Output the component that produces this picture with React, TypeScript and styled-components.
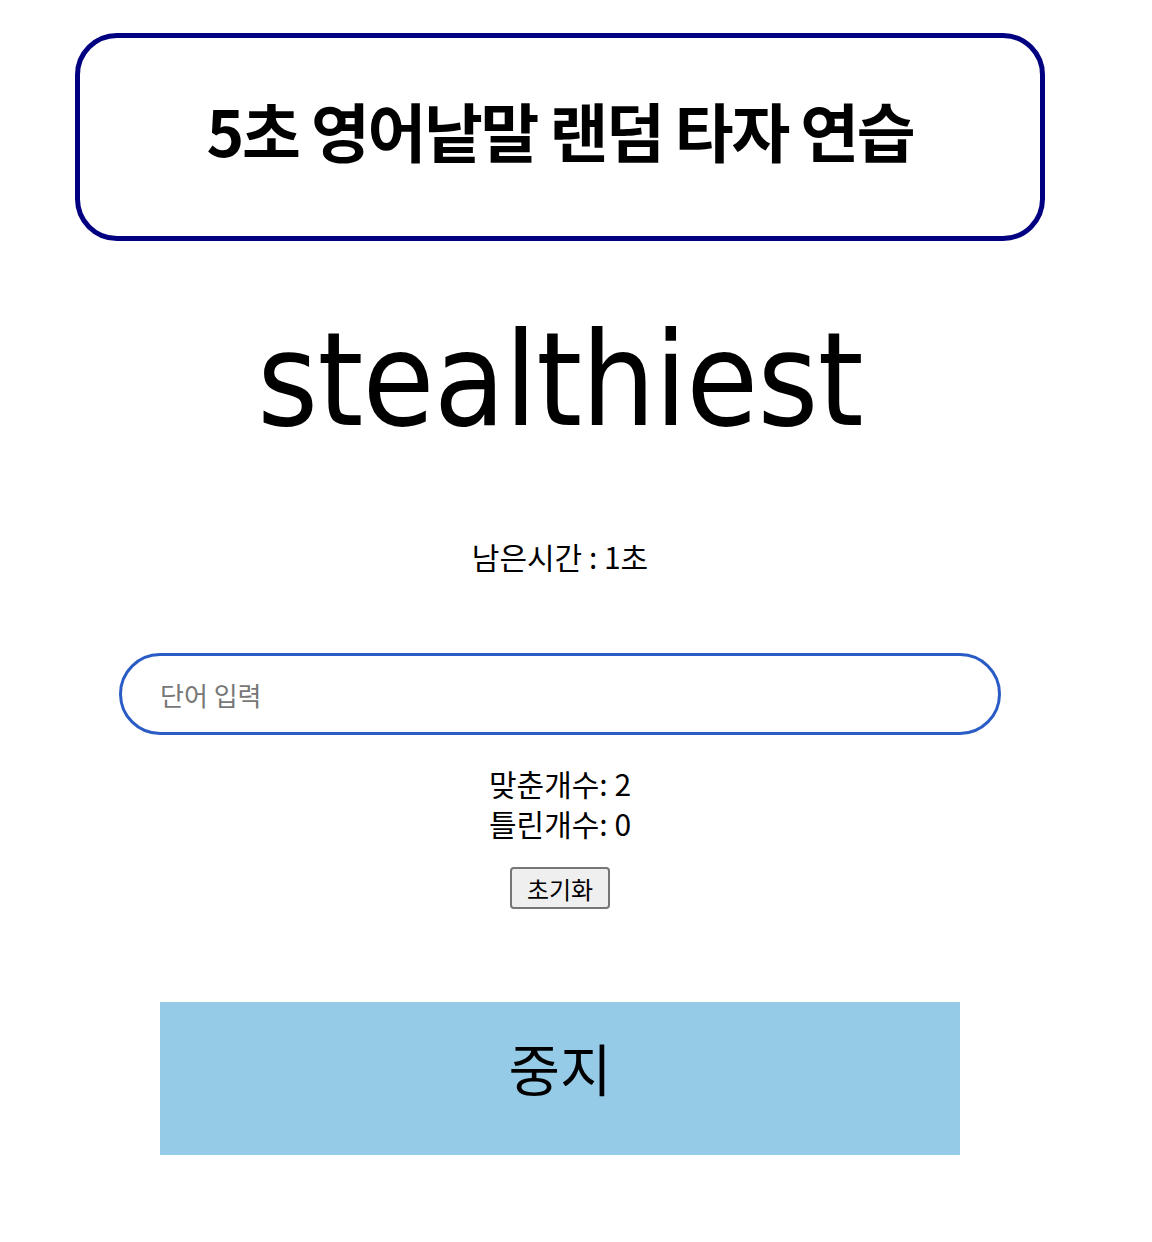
import styled, { createGlobalStyle } from "styled-components";

const GlobalStyle = createGlobalStyle`
  body {
    margin: 0;
    background: #fff;
    font-family: "Noto Sans CJK KR", "Noto Sans", sans-serif;
    color: #000;
  }
`;

const Page = styled.div`
  width: 1120px;
  display: flex;
  flex-direction: column;
  align-items: center;
  padding-top: 33px;
`;

const TitleBox = styled.div`
  width: 960px;
  height: 198px;
  border: 5px solid #000080;
  border-radius: 42px;
  display: flex;
  align-items: center;
  justify-content: center;
  box-sizing: content-box;
`;

const Title = styled.h1`
  margin: 0;
  padding-bottom: 16px;
  font-size: 64px;
  font-weight: 700;
  letter-spacing: -2.3px;
`;

const Word = styled.div`
  margin-top: 74px;
  font-family: "DejaVu Sans", sans-serif;
  font-stretch: condensed;
  font-size: 130px;
  letter-spacing: -0.8px;
  line-height: 1;
`;

const Timer = styled.p`
  margin: 91px 0 0;
  font-size: 30px;
  line-height: 40px;
`;

const WordInput = styled.input`
  margin-top: 77px;
  width: 882px;
  height: 82px;
  box-sizing: border-box;
  border: 3px solid #2a5cc6;
  border-radius: 41px;
  padding: 0 38px;
  font-family: "Noto Sans CJK KR", sans-serif;
  font-size: 26px;
  outline: none;

  &::placeholder {
    color: #777;
  }
`;

const Counts = styled.div`
  margin-top: 28px;
  text-align: center;
  font-size: 30px;
  line-height: 40px;
`;

const ResetButton = styled.button`
  margin-top: 24px;
  width: 100px;
  height: 42px;
  font-family: "Noto Sans CJK KR", sans-serif;
  font-size: 24px;
  background: #efefef;
  border: 2px solid #767676;
  border-radius: 4px;
  padding: 0;
`;

const StopButton = styled.button`
  margin-top: 93px;
  width: 800px;
  height: 153px;
  padding: 0 0 24px;
  background: #96cbe7;
  border: none;
  font-family: "Noto Sans CJK KR", sans-serif;
  font-size: 56px;
  color: #000;
`;

export default function App() {
  return (
    <>
      <GlobalStyle />
      <Page>
        <TitleBox>
          <Title>5초 영어낱말 랜덤 타자 연습</Title>
        </TitleBox>
        <Word>stealthiest</Word>
        <Timer>남은시간 : 1초</Timer>
        <WordInput placeholder="단어 입력" />
        <Counts>
          <div>맞춘개수: 2</div>
          <div>틀린개수: 0</div>
        </Counts>
        <ResetButton>초기화</ResetButton>
        <StopButton>중지</StopButton>
      </Page>
    </>
  );
}
